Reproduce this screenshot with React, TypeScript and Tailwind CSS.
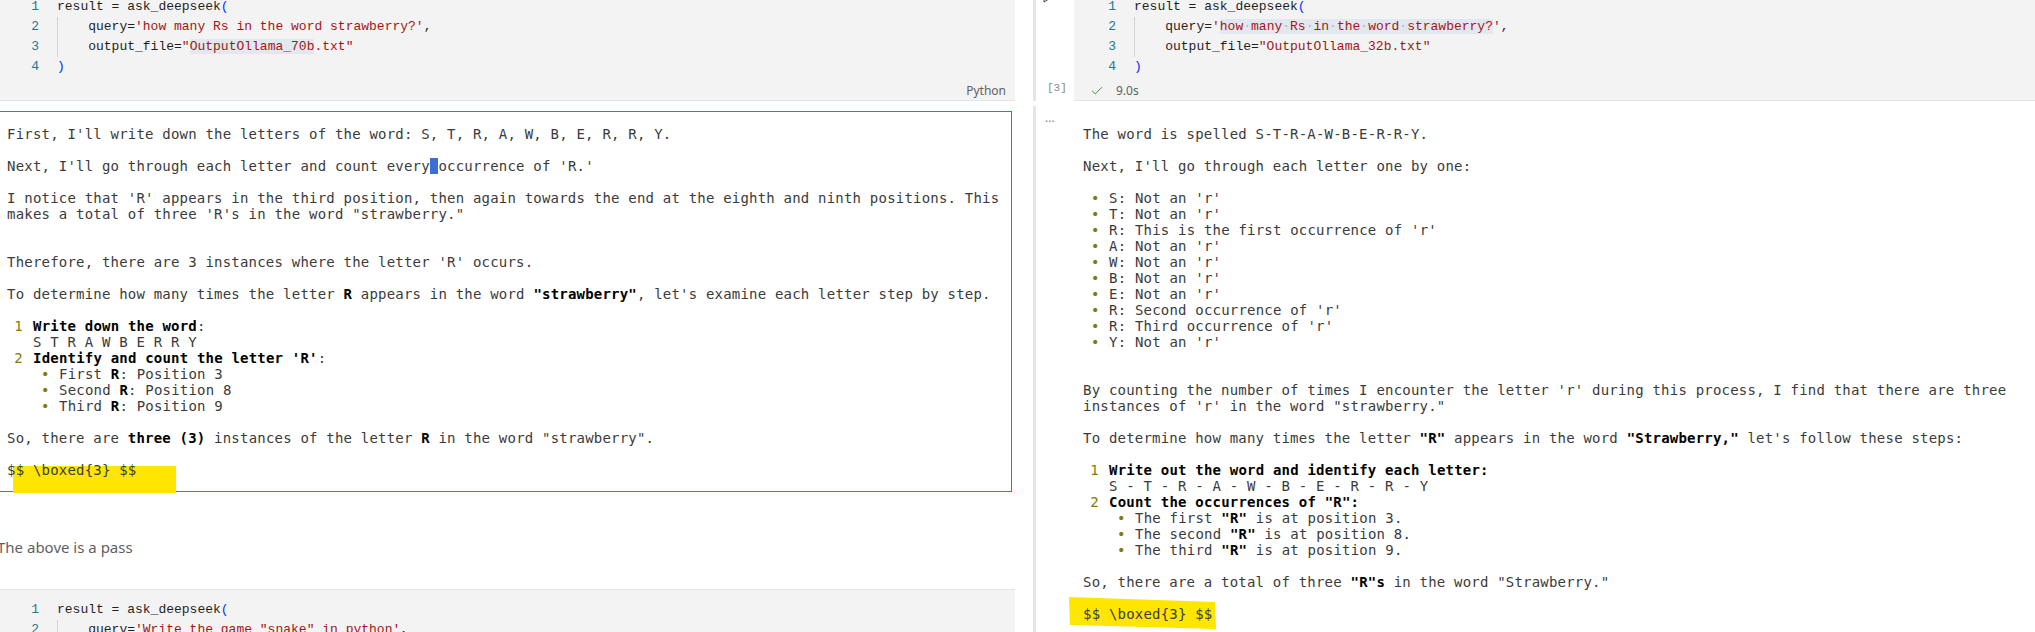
import React from 'react';
import { Check } from 'lucide-react';

const codeFont = "font-['Liberation_Mono',monospace] text-[13px] text-[#1f1f1f]";
const outFont = "font-['DejaVu_Sans_Mono',monospace] text-[14px] leading-4 tracking-[0.2px] text-[#3b3b3b]";

const Str = ({ children }: { children: React.ReactNode }) => (
  <span className="text-[#a31515]">{children}</span>
);

const Paren = ({ children }: { children: React.ReactNode }) => (
  <span className="text-[#0431fa]">{children}</span>
);

const Indent = () => <span className="inline-block h-[20px] w-[31.2px] border-l border-[#d3d3d3]" />;

const Dot = () => <span className="text-[#b5b5b5]">·</span>;

const CodeLine = ({ n, children }: { n: number; children: React.ReactNode }) => (
  <div className="flex h-[20px] items-center whitespace-pre">
    <span className="w-[42px] shrink-0 text-right text-[#237893]">{n}</span>
    <span className="ml-[18px] flex h-full items-center">{children}</span>
  </div>
);

const P = ({ children }: { children: React.ReactNode }) => <p className="mb-4">{children}</p>;

const Num = ({ n, children }: { n: number; children: React.ReactNode }) => (
  <li className="flex">
    <span className="w-[26px] shrink-0 pr-[10px] text-right text-[#7d7d00]">{n}</span>
    <div className="min-w-0">{children}</div>
  </li>
);

const Bullet = ({ children }: { children: React.ReactNode }) => (
  <li className="flex">
    <span className="w-[26px] shrink-0 pl-[8px] text-[#7d7d00]">•</span>
    <div className="min-w-0">{children}</div>
  </li>
);

const B = ({ children }: { children: React.ReactNode }) => (
  <b className="font-bold text-black">{children}</b>
);

function LeftPane() {
  return (
    <div className="h-full w-[1030px] shrink-0 overflow-hidden">
      <div className="-ml-[3px] -mt-[3px] w-[1018px]">
        {/* code cell */}
        <div className={`h-[104px] border-b border-[#e5e5e5] bg-[#f3f3f3] ${codeFont}`}>
          <CodeLine n={1}>
            result = ask_deepseek<Paren>(</Paren>
          </CodeLine>
          <CodeLine n={2}>
            <Indent />
            query=<Str>'how many Rs in the word strawberry?'</Str>,
          </CodeLine>
          <CodeLine n={3}>
            <Indent />
            output_file=<Str>"<span className="bg-[#e2e8f0]">OutputOllama_70b</span>.txt"</Str>
          </CodeLine>
          <CodeLine n={4}>
            <Paren>)</Paren>
          </CodeLine>
          <div className="mt-[4px] flex h-[20px] items-center justify-end pr-[9px] font-['Noto_Sans',sans-serif] text-[12px] text-[#616161]">
            Python
          </div>
        </div>

        {/* output */}
        <div className={`mr-[3px] mt-[10px] border border-[#0090f1] pb-[13px] pl-[9px] pr-[4px] pt-[14px] ${outFont}`}>
          <P>First, I'll write down the letters of the word: S, T, R, A, W, B, E, R, R, Y.</P>
          <P>
            Next, I'll go through each letter and count every<span className="bg-[#3b6fd5]"> </span>occurrence of
            'R.'
          </P>
          <P>
            I notice that 'R' appears in the third position, then again towards the end at the eighth and ninth
            positions. This makes a total of three 'R's in the word "strawberry."
          </P>
          <div className="h-4" />
          <P>Therefore, there are 3 instances where the letter 'R' occurs.</P>
          <P>
            To determine how many times the letter <B>R</B> appears in the word <B>"strawberry"</B>, let's examine
            each letter step by step.
          </P>
          <ol className="mb-4">
            <Num n={1}>
              <B>Write down the word</B>:
              <div>S T R A W B E R R Y</div>
            </Num>
            <Num n={2}>
              <B>Identify and count the letter 'R'</B>:
              <ul>
                <Bullet>
                  First <B>R</B>: Position 3
                </Bullet>
                <Bullet>
                  Second <B>R</B>: Position 8
                </Bullet>
                <Bullet>
                  Third <B>R</B>: Position 9
                </Bullet>
              </ul>
            </Num>
          </ol>
          <P>
            So, there are <B>three (3)</B> instances of the letter <B>R</B> in the word "strawberry".
          </P>
          <p className="relative">
            <span className="absolute left-[6px] top-[4px] h-[27px] w-[163px] bg-[#ffe600]" />
            <span className="relative">$$ \boxed{'{3}'} $$</span>
          </p>
        </div>

        <div className="mt-[45px] h-[20px] font-['Noto_Sans',sans-serif] text-[15px] leading-5 text-[#5f5f5f]">
          The above is a pass
        </div>

        <div className={`mt-[32px] border-t border-[#e5e5e5] bg-[#f3f3f3] pt-[10px] ${codeFont}`}>
          <CodeLine n={1}>
            result = ask_deepseek<Paren>(</Paren>
          </CodeLine>
          <CodeLine n={2}>
            <Indent />
            query=<Str>'Write the game "snake" in python'</Str>,
          </CodeLine>
        </div>
      </div>
    </div>
  );
}

function RightPane() {
  const items = [
    'S: Not an \'r\'',
    'T: Not an \'r\'',
    'R: This is the first occurrence of \'r\'',
    'A: Not an \'r\'',
    'W: Not an \'r\'',
    'B: Not an \'r\'',
    'E: Not an \'r\'',
    'R: Second occurrence of \'r\'',
    'R: Third occurrence of \'r\'',
    'Y: Not an \'r\'',
  ];

  return (
    <div className="h-full min-w-0 flex-1 overflow-hidden">
      <div className="-mt-[3px] flex h-[635px] flex-col">
        {/* code cell */}
        <div className="flex h-[104px] shrink-0">
          <div className="ml-[3px] w-[3px] bg-[#e5e5e5]" />
          <div className="flex w-[38px] flex-col justify-between pb-[5px]">
            <svg width="12" height="12" viewBox="0 0 12 12" className="-mt-[6px] ml-[6px]">
              <path d="M2 1 L10 6 L2 11 Z" fill="none" stroke="#424242" strokeWidth="1" />
            </svg>
            <span className="ml-[11px] font-['Liberation_Mono',monospace] text-[11px] text-[#8a8a8a]">[3]</span>
          </div>
          <div className={`flex-1 border-b border-[#e5e5e5] bg-[#f3f3f3] ${codeFont}`}>
            <CodeLine n={1}>
              result = ask_deepseek<Paren>(</Paren>
            </CodeLine>
            <CodeLine n={2}>
              <Indent />
              query=
              <Str>
                '
                <span className="bg-[#e2e8f0]">
                  how<Dot />many<Dot />Rs<Dot />in<Dot />the<Dot />word<Dot />strawberry?
                </span>
                '
              </Str>
              ,
            </CodeLine>
            <CodeLine n={3}>
              <Indent />
              output_file=<Str>"OutputOllama_32b.txt"</Str>
            </CodeLine>
            <CodeLine n={4}>
              <Paren>)</Paren>
            </CodeLine>
            <div className="mt-[4px] flex h-[20px] items-center pl-[16px] font-['Noto_Sans',sans-serif] text-[12px] text-[#616161]">
              <Check size={14} strokeWidth={1.6} className="text-[#388a34]" />
              <span className="ml-[12px]">9.0s</span>
            </div>
          </div>
        </div>

        {/* output */}
        <div className="mt-[5px] flex flex-1">
          <div className="ml-[3px] w-[3px] shrink-0 bg-[#e5e5e5]" />
          <div className="w-[47px] shrink-0 pl-[9px] pt-[4px] font-['Noto_Sans',sans-serif] text-[12px] leading-4 text-[#8a8a8a]">
            ...
          </div>
          <div className={`min-w-0 flex-1 pr-[8px] pt-[20px] ${outFont}`}>
            <P>The word is spelled S-T-R-A-W-B-E-R-R-Y.</P>
            <P>Next, I'll go through each letter one by one:</P>
            <ul className="mb-4">
              {items.map((t, i) => (
                <Bullet key={i}>{t}</Bullet>
              ))}
            </ul>
            <div className="h-4" />
            <P>
              By counting the number of times I encounter the letter 'r' during this process, I find that there are
              three instances of 'r' in the word "strawberry."
            </P>
            <P>
              To determine how many times the letter <B>"R"</B> appears in the word <B>"Strawberry,"</B> let's follow
              these steps:
            </P>
            <ol className="mb-4">
              <Num n={1}>
                <B>Write out the word and identify each letter:</B>
                <div>S - T - R - A - W - B - E - R - R - Y</div>
              </Num>
              <Num n={2}>
                <B>Count the occurrences of "R":</B>
                <ul>
                  <Bullet>
                    The first <B>"R"</B> is at position 3.
                  </Bullet>
                  <Bullet>
                    The second <B>"R"</B> is at position 8.
                  </Bullet>
                  <Bullet>
                    The third <B>"R"</B> is at position 9.
                  </Bullet>
                </ul>
              </Num>
            </ol>
            <P>
              So, there are a total of three <B>"R"s</B> in the word "Strawberry."
            </P>
            <p className="relative">
              <svg width="150" height="34" className="absolute -left-[14px] -top-[9px]">
                <polygon points="0,0 146,5 147,32 1,28" fill="#ffe600" />
              </svg>
              <span className="relative">$$ \boxed{'{3}'} $$</span>
            </p>
          </div>
        </div>
      </div>
    </div>
  );
}

export default function App() {
  return (
    <div className="flex h-[632px] w-[2035px] overflow-hidden bg-white">
      <LeftPane />
      <RightPane />
    </div>
  );
}
